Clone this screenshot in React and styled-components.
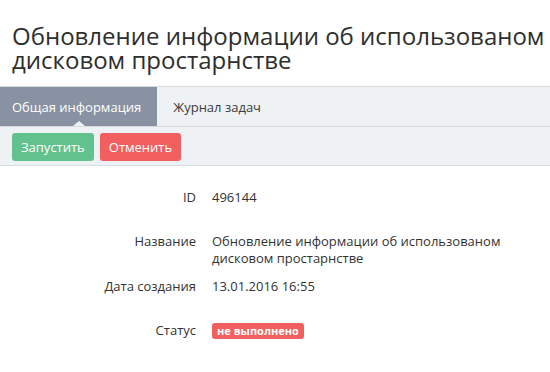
import React from 'react'
import styled, { createGlobalStyle } from 'styled-components'

const GlobalStyle = createGlobalStyle`
  body {
    margin: 0;
    background: #fff;
    font-family: "Open Sans", "Liberation Sans", sans-serif;
    color: #333;
  }
`

const Page = styled.div`
  width: 550px;
`

const Title = styled.h1`
  margin: 0;
  padding: 24px 0 14px 12px;
  font-size: 24px;
  line-height: 24px;
  font-weight: 400;
  color: #2e2e2e;
`

const Tabs = styled.div`
  display: flex;
  height: 39px;
  background: #eff2f5;
  border-top: 1px solid #d7dce1;
  border-bottom: 1px solid #d7dce1;
`

const Tab = styled.div`
  position: relative;
  display: flex;
  align-items: center;
  padding: ${(p) => (p.active ? '0 16px 0 12px' : '0 16px')};
  font-size: 13px;
  color: ${(p) => (p.active ? '#fff' : '#3c3c3c')};
  background: ${(p) => (p.active ? '#8992a3' : 'transparent')};

  &::after {
    content: '';
    display: ${(p) => (p.active ? 'block' : 'none')};
    position: absolute;
    left: 50%;
    bottom: 0;
    margin-left: -6px;
    border-left: 6px solid transparent;
    border-right: 6px solid transparent;
    border-bottom: 5px solid #eff2f5;
  }
`

const Toolbar = styled.div`
  display: flex;
  gap: 6px;
  padding: 6px 12px 4px;
  background: #eff2f5;
  border-bottom: 1px solid #d7dce1;
`

const Button = styled.button`
  height: 28px;
  padding: 0 9px;
  border: none;
  border-radius: 3px;
  font-family: inherit;
  font-size: 13px;
  color: #fff;
  background: ${(p) => (p.kind === 'danger' ? '#f25f5f' : '#62c28e')};
`

const Details = styled.div`
  padding-top: 23px;
`

const Row = styled.div`
  display: grid;
  grid-template-columns: 196px 1fr;
  column-gap: 16px;
  font-size: 13px;
  line-height: 17px;
  margin-bottom: ${(p) => (p.spaced ? '27px' : '11px')};
`

const Label = styled.div`
  text-align: right;
  color: #333;
`

const Value = styled.div`
  color: #333;
  padding-right: 20px;
`

const Badge = styled.span`
  display: inline-block;
  padding: 0 5px;
  height: 16px;
  line-height: 16px;
  border-radius: 3px;
  background: #f25f5f;
  color: #fff;
  font-size: 11px;
  font-weight: 700;
`

export default function App() {
  return (
    <Page>
      <GlobalStyle />
      <Title>Обновление информации об использованом дисковом простарнстве</Title>
      <Tabs>
        <Tab active>Общая информация</Tab>
        <Tab>Журнал задач</Tab>
      </Tabs>
      <Toolbar>
        <Button>Запустить</Button>
        <Button kind="danger">Отменить</Button>
      </Toolbar>
      <Details>
        <Row spaced>
          <Label>ID</Label>
          <Value>496144</Value>
        </Row>
        <Row>
          <Label>Название</Label>
          <Value>Обновление информации об использованом дисковом простарнстве</Value>
        </Row>
        <Row spaced>
          <Label>Дата создания</Label>
          <Value>13.01.2016 16:55</Value>
        </Row>
        <Row>
          <Label>Статус</Label>
          <Value>
            <Badge>не выполнено</Badge>
          </Value>
        </Row>
      </Details>
    </Page>
  )
}
